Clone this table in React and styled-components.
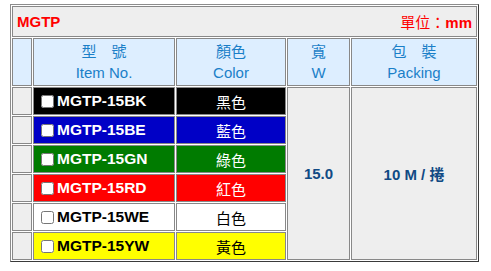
import styled, { createGlobalStyle } from 'styled-components';

const GlobalStyle = createGlobalStyle`
  body {
    margin: 0;
    background: #fff;
    font-family: "Liberation Sans", Arial, "Noto Sans CJK TC", sans-serif;
  }
`;

const Table = styled.table`
  margin: 4px 0 0 10px;
  width: 469px;
  border-collapse: separate;
  border-spacing: 1px;
  border: 1px solid;
  border-color: #8c8c8c #3a3a3a #3a3a3a #8c8c8c;
  background: #fff;
  font-size: 15px;
`;

const Cell = styled.td`
  box-sizing: border-box;
  border: 1px solid #888;
  padding: 0 3px;
  vertical-align: middle;
`;

const TitleCell = styled(Cell)`
  height: 31px;
  background: #eee;
  color: #ff0000;
  padding: 0 4px;
`;

const TitleBar = styled.div`
  display: flex;
  justify-content: space-between;
  align-items: center;
`;

const Bold = styled.b`
  font-weight: bold;
`;

const HeadCell = styled(Cell)`
  width: ${({ $w }) => $w}px;
  height: 48px;
  padding: 2px;
  background: #ddeeff;
  color: #1a7fc8;
  text-align: center;
  line-height: 21px;
`;

const SideCell = styled(Cell)`
  height: 28px;
  background: #eee;
`;

const ItemCell = styled(Cell)`
  background: ${({ $bg }) => $bg};
  color: ${({ $fg }) => $fg};
  font-size: 15.5px;
  font-weight: bold;
  white-space: nowrap;
`;

const Check = styled.input`
  margin: 3px 3px 3px 4px;
  width: 13px;
  height: 13px;
  vertical-align: -2px;
`;

const ColorCell = styled(Cell)`
  background: ${({ $bg }) => $bg};
  color: ${({ $fg }) => $fg};
  text-align: center;
`;

const SpecCell = styled(Cell)`
  background: #eee;
  color: #114a84;
  font-weight: bold;
  text-align: center;
`;

const items = [
  { code: 'MGTP-15BK', name: '黑色', bg: '#000000', fg: '#ffffff' },
  { code: 'MGTP-15BE', name: '藍色', bg: '#0000c6', fg: '#ffffff' },
  { code: 'MGTP-15GN', name: '綠色', bg: '#007b00', fg: '#ffffff' },
  { code: 'MGTP-15RD', name: '紅色', bg: '#ff0000', fg: '#ffffff' },
  { code: 'MGTP-15WE', name: '白色', bg: '#ffffff', fg: '#000000' },
  { code: 'MGTP-15YW', name: '黃色', bg: '#ffff00', fg: '#000000' },
];

export default function App() {
  return (
    <>
      <GlobalStyle />
      <Table>
        <tbody>
          <tr>
            <TitleCell colSpan={5}>
              <TitleBar>
                <Bold>MGTP</Bold>
                <span>
                  單位：<Bold>mm</Bold>
                </span>
              </TitleBar>
            </TitleCell>
          </tr>
          <tr>
            <HeadCell $w={20} />
            <HeadCell $w={142}>
              型　號
              <br />
              Item No.
            </HeadCell>
            <HeadCell $w={110}>
              顏色
              <br />
              Color
            </HeadCell>
            <HeadCell $w={63}>
              寬
              <br />W
            </HeadCell>
            <HeadCell $w={126}>
              包　裝
              <br />
              Packing
            </HeadCell>
          </tr>
          {items.map((item, i) => (
            <tr key={item.code}>
              <SideCell />
              <ItemCell $bg={item.bg} $fg={item.fg}>
                <Check type="checkbox" />
                {item.code}
              </ItemCell>
              <ColorCell $bg={item.bg} $fg={item.fg}>
                {item.name}
              </ColorCell>
              {i === 0 && (
                <>
                  <SpecCell rowSpan={items.length}>15.0</SpecCell>
                  <SpecCell rowSpan={items.length}>10 M / 捲</SpecCell>
                </>
              )}
            </tr>
          ))}
        </tbody>
      </Table>
    </>
  );
}
